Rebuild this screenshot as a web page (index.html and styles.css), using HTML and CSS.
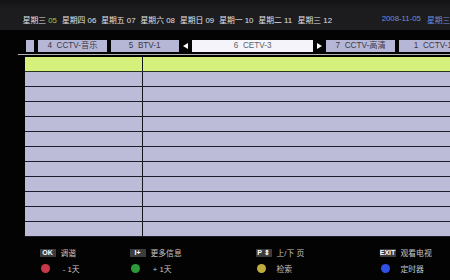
FILE: index.html
```html
<!DOCTYPE html>
<html lang="zh">
<head>
<meta charset="utf-8">
<title>EPG</title>
<link rel="stylesheet" href="styles.css">
</head>
<body>
<div class="screen">
  <header class="topbar">
    <div class="days">
      <span class="day">星期三 <em class="cur">05</em></span>
      <span class="day">星期四 06</span>
      <span class="day">星期五 07</span>
      <span class="day">星期六 08</span>
      <span class="day">星期日 09</span>
      <span class="day">星期一 10</span>
      <span class="day">星期二 11</span>
      <span class="day">星期三 12</span>
    </div>
    <div class="today"><span>2008-11-05</span><span class="wd">星期三</span></div>
  </header>

  <nav class="tabs">
    <div class="tab stub"></div>
    <div class="tab">4&nbsp; CCTV-音乐</div>
    <div class="tab">5&nbsp; BTV-1</div>
    <div class="arrow"><svg width="5" height="6" viewBox="0 0 5 6"><polygon points="5,0 5,6 0,3" fill="#fff"/></svg></div>
    <div class="tab active">6&nbsp; CETV-3</div>
    <div class="arrow"><svg width="5" height="6" viewBox="0 0 5 6"><polygon points="0,0 0,6 5,3" fill="#fff"/></svg></div>
    <div class="tab">7&nbsp; CCTV-高清</div>
    <div class="tab">1&nbsp; CCTV-1</div>
  </nav>

  <div class="rule"></div>

  <div class="grid">
    <div class="row sel"><div class="cell time"></div><div class="cell"></div></div>
    <div class="row"><div class="cell time"></div><div class="cell"></div></div>
    <div class="row"><div class="cell time"></div><div class="cell"></div></div>
    <div class="row"><div class="cell time"></div><div class="cell"></div></div>
    <div class="row"><div class="cell time"></div><div class="cell"></div></div>
    <div class="row"><div class="cell time"></div><div class="cell"></div></div>
    <div class="row"><div class="cell time"></div><div class="cell"></div></div>
    <div class="row"><div class="cell time"></div><div class="cell"></div></div>
    <div class="row"><div class="cell time"></div><div class="cell"></div></div>
    <div class="row"><div class="cell time"></div><div class="cell"></div></div>
    <div class="row"><div class="cell time"></div><div class="cell"></div></div>
    <div class="row last"><div class="cell time"></div><div class="cell"></div></div>
  </div>

  <footer class="legend">
    <div class="item"><span class="slot"><span class="key">OK</span></span><span class="lbl">调谐</span></div>
    <div class="item"><span class="slot"><span class="key">I+</span></span><span class="lbl">更多信息</span></div>
    <div class="item"><span class="slot"><span class="key">P ⇕</span></span><span class="lbl">上/下 页</span></div>
    <div class="item"><span class="slot"><span class="key">EXIT</span></span><span class="lbl">观看电视</span></div>
    <div class="item"><span class="slot"><span class="dot red"></span></span><span class="lbl">&nbsp;- 1天</span></div>
    <div class="item"><span class="slot"><span class="dot green"></span></span><span class="lbl">&nbsp;+ 1天</span></div>
    <div class="item"><span class="slot"><span class="dot yellow"></span></span><span class="lbl">检索</span></div>
    <div class="item"><span class="slot"><span class="dot blue"></span></span><span class="lbl">定时器</span></div>
  </footer>
</div>
</body>
</html>
```

FILE: styles.css
```css
* { box-sizing: border-box; margin: 0; padding: 0; }
html, body { background: #000; }
body {
  width: 450px;
  height: 280px;
  overflow: hidden;
  font-family: "Liberation Sans", "Noto Sans CJK SC", sans-serif;
}
.screen { width: 450px; height: 280px; overflow: hidden; background: #030303; }

.topbar {
  height: 30px;
  padding: 9px 0 0 22.7px;
  display: flex;
  align-items: center;
  background: linear-gradient(#131315 0, #1c1c1f 30%, #1d1d20 100%);
  white-space: nowrap;
  font-size: 7.8px;
  color: #e0e0e4;
}
.days { display: grid; grid-template-columns: repeat(8, 39.3px); }
.day em { font-style: normal; }
.cur { color: #9cc84a; }
.today { margin-left: 44.6px; color: #6a8ee0; display: flex; gap: 6px; }

.tabs {
  margin-top: 9.5px;
  height: 12.5px;
  padding-left: 25.7px;
  display: flex;
  gap: 4px;
  white-space: nowrap;
}
.tab {
  flex: none;
  width: 68.3px;
  background: #b6b6d6;
  color: #3a3a4a;
  font-size: 8.2px;
  line-height: 12.5px;
  text-align: center;
}
.tab.stub { width: 8.6px; }
.tab.active { width: 121.6px; background: #f4f4fa; color: #606068; }
.arrow { flex: none; width: 5px; display: flex; align-items: center; }
.arrow svg { display: block; }

.rule { margin: 2px 0 2.3px 18px; height: 1.2px; background: #b4b4b8; }

.grid { margin-left: 25px; width: 425px; }
.row {
  display: grid;
  grid-template-columns: 117.5px 1fr;
  height: 15px;
  border-bottom: 1.4px solid #1c1c2a;
  background: #bcbcd9;
}
.row.sel { background: #d6f07c; border-bottom-color: #2a3220; }
.cell.time { border-right: 1.4px solid #16161f; }

.legend {
  padding: 7.5px 0 0 39.5px;
  display: grid;
  grid-template-columns: 90px 126px 124px 70px;
  grid-auto-rows: 16px;
  font-size: 7.8px;
  color: #c6c6c8;
}
.item { display: flex; align-items: center; white-space: nowrap; }
.slot { width: 21px; flex: none; display: flex; align-items: center; }
.key {
  display: inline-block;
  width: 16px;
  height: 8.6px;
  background: #3c3c3e;
  color: #fff;
  font-weight: bold;
  font-size: 7px;
  line-height: 8.6px;
  text-align: center;
}
.dot { display: inline-block; width: 9px; height: 9px; border-radius: 50%; margin-left: 1px; }
.dot.red { background: #c83848; }
.dot.green { background: #2c9a38; }
.dot.yellow { background: #c0ac3a; }
.dot.blue { background: #3050e8; }
```
